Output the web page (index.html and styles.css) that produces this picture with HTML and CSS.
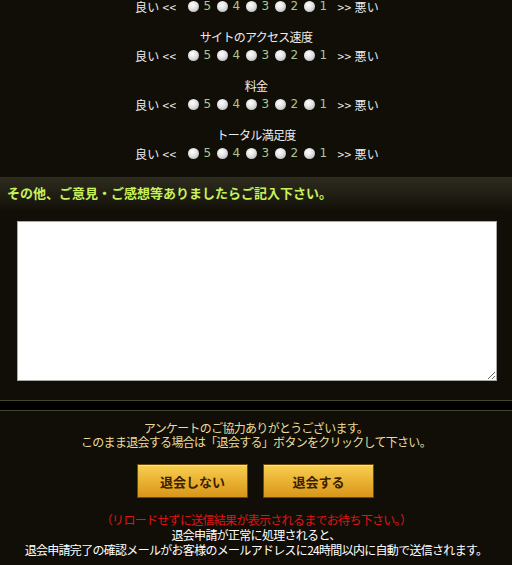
FILE: index.html
```html
<!DOCTYPE html>
<html lang="ja">
<head>
<meta charset="utf-8">
<link rel="stylesheet" href="styles.css">
</head>
<body>
<div class="ratings">
  <div class="group">
    <div class="row"><span class="end">良い &lt;&lt;</span><span class="opt"><span class="radio"></span><span class="num">5</span></span><span class="opt"><span class="radio"></span><span class="num">4</span></span><span class="opt"><span class="radio"></span><span class="num">3</span></span><span class="opt"><span class="radio"></span><span class="num">2</span></span><span class="opt"><span class="radio"></span><span class="num">1</span></span><span class="end">&gt;&gt; 悪い</span></div>
  </div>
  <div class="group">
    <div class="label">サイトのアクセス速度</div>
    <div class="row"><span class="end">良い &lt;&lt;</span><span class="opt"><span class="radio"></span><span class="num">5</span></span><span class="opt"><span class="radio"></span><span class="num">4</span></span><span class="opt"><span class="radio"></span><span class="num">3</span></span><span class="opt"><span class="radio"></span><span class="num">2</span></span><span class="opt"><span class="radio"></span><span class="num">1</span></span><span class="end">&gt;&gt; 悪い</span></div>
  </div>
  <div class="group">
    <div class="label">料金</div>
    <div class="row"><span class="end">良い &lt;&lt;</span><span class="opt"><span class="radio"></span><span class="num">5</span></span><span class="opt"><span class="radio"></span><span class="num">4</span></span><span class="opt"><span class="radio"></span><span class="num">3</span></span><span class="opt"><span class="radio"></span><span class="num">2</span></span><span class="opt"><span class="radio"></span><span class="num">1</span></span><span class="end">&gt;&gt; 悪い</span></div>
  </div>
  <div class="group">
    <div class="label">トータル満足度</div>
    <div class="row"><span class="end">良い &lt;&lt;</span><span class="opt"><span class="radio"></span><span class="num">5</span></span><span class="opt"><span class="radio"></span><span class="num">4</span></span><span class="opt"><span class="radio"></span><span class="num">3</span></span><span class="opt"><span class="radio"></span><span class="num">2</span></span><span class="opt"><span class="radio"></span><span class="num">1</span></span><span class="end">&gt;&gt; 悪い</span></div>
  </div>
</div>

<div class="section-head">その他、ご意見・ご感想等ありましたらご記入下さい。</div>

<div class="comment-wrap">
  <textarea class="comment"></textarea>
</div>

<div class="separator"></div>

<div class="thanks">
  <p>アンケートのご協力ありがとうございます。</p>
  <p>このまま退会する場合は「退会する」ボタンをクリックして下さい。</p>
</div>

<div class="buttons">
  <button class="btn" type="button">退会しない</button>
  <button class="btn" type="button">退会する</button>
</div>

<div class="notes">
  <p class="warn">（リロードせずに送信結果が表示されるまでお待ち下さい。）</p>
  <p>退会申請が正常に処理されると、</p>
  <p>退会申請完了の確認メールがお客様のメールアドレスに24時間以内に自動で送信されます。</p>
</div>
</body>
</html>
```

FILE: styles.css
```css
html, body {
  margin: 0;
  padding: 0;
  background: #100e07;
}
body {
  font-family: "Noto Sans CJK JP", "DejaVu Sans", sans-serif;
  font-size: 12px;
  letter-spacing: -0.7px;
  color: #ececec;
  width: 512px;
  height: 565px;
  overflow: hidden;
}
p { margin: 0; }

.ratings {
  margin-top: -3px;
  text-align: center;
}
.group { margin-bottom: 11px; }
.label, .row {
  height: 19px;
  line-height: 19px;
  white-space: nowrap;
}
.label { color: #ececec; }
.row {
  display: flex;
  justify-content: center;
  align-items: center;
  padding-left: 2px;
}
.end { color: #ececec; letter-spacing: 0.3px; }
.end:first-child { margin-right: 11px; }
.end:last-child { margin-left: 5px; }
.opt {
  display: inline-flex;
  align-items: center;
  margin-right: 5px;
}
.radio {
  display: inline-block;
  width: 11px;
  height: 11px;
  border-radius: 50%;
  background: radial-gradient(circle at 40% 35%, #ffffff 0%, #e2e2e2 45%, #a0a0a0 100%);
  margin-right: 5px;
}
.num {
  color: #a8c993;
  font-family: "DejaVu Sans", sans-serif;
  font-size: 12px;
  letter-spacing: 0;
  width: 8px;
  text-align: left;
}

.section-head {
  margin-top: 14px;
  height: 35px;
  line-height: 31px;
  padding-left: 7px;
  color: #c8f25a;
  font-weight: bold;
  font-size: 13px;
  letter-spacing: 0;
  background: linear-gradient(to bottom, #2e2c1e 0%, #1f1d12 55%, #100e07 100%);
}

.comment-wrap {
  padding: 9px 15px 0 17px;
}
.comment {
  display: block;
  box-sizing: border-box;
  width: 480px;
  height: 160px;
  margin: 0;
  border: 1px solid #a8a8a8;
  background: #ffffff;
  resize: both;
}

.separator {
  margin-top: 19px;
  height: 9px;
  background: #000;
  border-top: 1px solid #46452e;
  border-bottom: 1px solid #46452e;
}

.thanks {
  margin-top: 10px;
  text-align: center;
  color: #e9dc9c;
  line-height: 14px;
}

.buttons {
  display: flex;
  justify-content: center;
  gap: 15px;
  margin-top: 15px;
  padding-right: 1px;
}
.btn {
  width: 111px;
  height: 34px;
  border: 1px solid #6b4a0a;
  background: linear-gradient(to bottom, #f7cf52 0%, #eab232 50%, #d8951a 100%);
  color: #3a1f00;
  font-family: "Noto Sans CJK JP", sans-serif;
  font-weight: bold;
  font-size: 13px;
  letter-spacing: 0;
  padding: 0;
  box-shadow: inset 0 1px 0 rgba(255,240,180,0.6);
}

.notes {
  margin-top: 14px;
  text-align: center;
  line-height: 15px;
  color: #ffffff;
}
.notes .warn { color: #e01414; }
```
